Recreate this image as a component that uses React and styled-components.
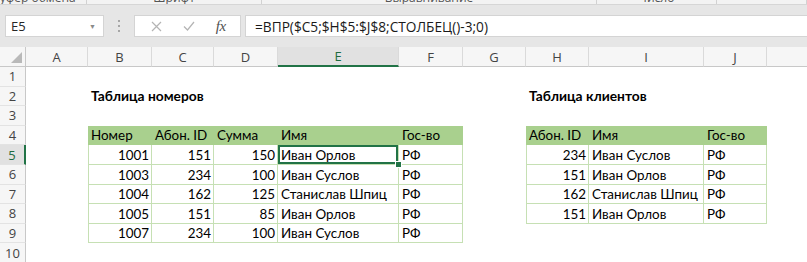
import React from 'react';
import styled, { createGlobalStyle, css } from 'styled-components';

const GlobalStyle = createGlobalStyle`
  html, body {
    margin: 0;
    padding: 0;
    background: #ffffff;
  }
  body {
    font-family: 'Open Sans', 'Noto Sans', sans-serif;
  }
`;

const Window = styled.div`
  width: 807px;
  height: 262px;
  overflow: hidden;
  display: flex;
  flex-direction: column;
  background: #ffffff;
`;

const RibbonStrip = styled.div`
  height: 4px;
  flex: none;
  display: flex;
  overflow: hidden;
  background: #f3f3f3;
  border-bottom: 1px solid #d6d6d6;
`;

const RibbonGroup = styled.div`
  width: ${(p) => p.$w}px;
  flex: none;
  display: flex;
  justify-content: center;
  border-right: 1px solid #d2d2d2;
  padding-right: ${(p) => p.$shift || 0}px;
  box-sizing: border-box;
`;

const RibbonLabel = styled.span`
  font-size: 12px;
  line-height: 12px;
  color: #555555;
  white-space: nowrap;
  transform: translateY(-8px);
`;

const FormulaBar = styled.div`
  height: 42px;
  flex: none;
  display: flex;
  align-items: flex-start;
  padding: 10px 0 0 5px;
  box-sizing: border-box;
  background: #e6e6e6;
`;

const NameBox = styled.div`
  width: 99px;
  height: 22px;
  box-sizing: border-box;
  display: flex;
  align-items: center;
  justify-content: space-between;
  padding: 0 7px 0 5px;
  background: #ffffff;
  border: 1px solid #d4d4d4;
  font-size: 13px;
  color: #262626;
`;

const Caret = styled.span`
  font-size: 7px;
  color: #8a8a8a;
`;

const Grip = styled.div`
  width: 30px;
  height: 22px;
  display: flex;
  flex-direction: column;
  align-items: center;
  justify-content: center;
  gap: 3px;

  span {
    width: 2px;
    height: 2px;
    background: #a6a6a6;
  }
`;

const FuncButtons = styled.div`
  width: 107px;
  height: 22px;
  box-sizing: border-box;
  display: flex;
  align-items: center;
  justify-content: space-around;
  padding: 0 4px 0 6px;
  background: #ffffff;
  border: 1px solid #d4d4d4;
`;

const Fx = styled.span`
  font-family: 'Liberation Serif', serif;
  font-style: italic;
  font-size: 15px;
  color: #505050;
  letter-spacing: -0.5px;
`;

const FormulaInput = styled.div`
  flex: 1;
  height: 22px;
  margin-left: 4px;
  box-sizing: border-box;
  display: flex;
  align-items: center;
  padding-left: 9px;
  background: #ffffff;
  border: 1px solid #d4d4d4;
  border-right: none;
  font-size: 13.7px;
  color: #1a1a1a;
  white-space: nowrap;
`;

const Sheet = styled.div`
  flex: 1;
  display: grid;
  grid-template-columns: 26px 62px 64px 62px 64px 121px 64px 63px 63px 115px 63px 64px;
  grid-template-rows: 20px repeat(10, 19.6px);
  background: #ffffff;
  overflow: hidden;
`;

const Corner = styled.div`
  background: #f6f6f6;
  border-right: 1px solid #c8c8c8;
  border-bottom: 1px solid #c8c8c8;
  display: flex;
  align-items: flex-end;
  justify-content: flex-end;
  padding: 0 3px 3px 0;
`;

const ColHead = styled.div`
  display: flex;
  align-items: center;
  justify-content: center;
  background: ${(p) => (p.$active ? '#e1e1e1' : '#f6f6f6')};
  border-right: 1px solid #dadada;
  border-bottom: ${(p) => (p.$active ? '2px solid #217346' : '1px solid #c8c8c8')};
  font-size: 13px;
  color: ${(p) => (p.$active ? '#1d6b40' : '#444444')};
  box-sizing: border-box;
`;

const RowHead = styled.div`
  display: flex;
  align-items: center;
  justify-content: center;
  background: ${(p) => (p.$active ? '#e1e1e1' : '#f6f6f6')};
  border-right: ${(p) => (p.$active ? '2px solid #217346' : '1px solid #c8c8c8')};
  border-bottom: 1px solid #e3e3e3;
  font-size: 13px;
  color: ${(p) => (p.$active ? '#1d6b40' : '#444444')};
  box-sizing: border-box;
`;

const tableEdge = '#c6e0b4';

const Cell = styled.div`
  position: relative;
  display: flex;
  align-items: flex-end;
  justify-content: ${(p) => (p.$num ? 'flex-end' : 'flex-start')};
  padding: 0 2px 2px 3px;
  box-sizing: border-box;
  font-family: 'Lato', 'Open Sans', sans-serif;
  font-size: 13.4px;
  line-height: 16px;
  color: #000000;
  white-space: nowrap;

  ${(p) =>
    p.$kind === 'head' &&
    css`
      background: #a9d08e;
    `}

  ${(p) =>
    p.$kind === 'body' &&
    css`
      border-right: 1px solid ${tableEdge};
      border-bottom: 1px solid ${tableEdge};
      padding-bottom: 1px;
    `}

  ${(p) =>
    p.$kind === 'body' &&
    p.$first &&
    css`
      border-left: 1px solid ${tableEdge};
    `}

  ${(p) =>
    p.$kind === 'title' &&
    css`
      font-weight: 700;
      font-size: 13.8px;
      overflow: visible;
    `}

  ${(p) =>
    p.$selected &&
    css`
      box-shadow: inset 0 0 0 2px #217346;
      z-index: 1;

      &::after {
        content: '';
        position: absolute;
        right: -4px;
        bottom: -4px;
        width: 5px;
        height: 5px;
        background: #217346;
        border: 1px solid #ffffff;
      }
    `}
`;

const columns = ['A', 'B', 'C', 'D', 'E', 'F', 'G', 'H', 'I', 'J', ''];

const leftHeader = ['Номер', 'Абон. ID', 'Сумма', 'Имя', 'Гос-во'];
const leftRows = [
  [1001, 151, 150, 'Иван Орлов', 'РФ'],
  [1003, 234, 100, 'Иван Суслов', 'РФ'],
  [1004, 162, 125, 'Станислав Шпиц', 'РФ'],
  [1005, 151, 85, 'Иван Орлов', 'РФ'],
  [1007, 234, 100, 'Иван Суслов', 'РФ'],
];

const rightHeader = ['Абон. ID', 'Имя', 'Гос-во'];
const rightRows = [
  [234, 'Иван Суслов', 'РФ'],
  [151, 'Иван Орлов', 'РФ'],
  [162, 'Станислав Шпиц', 'РФ'],
  [151, 'Иван Орлов', 'РФ'],
];

// map of "row:colIndex" -> what that cell holds
const buildCells = () => {
  const cells = {};
  cells['2:1'] = { kind: 'title', text: 'Таблица номеров' };
  cells['2:7'] = { kind: 'title', text: 'Таблица клиентов' };

  leftHeader.forEach((t, i) => {
    cells[`4:${1 + i}`] = { kind: 'head', text: t };
  });
  leftRows.forEach((row, r) => {
    row.forEach((v, i) => {
      cells[`${5 + r}:${1 + i}`] = {
        kind: 'body',
        text: v,
        num: typeof v === 'number',
        first: i === 0,
        selected: r === 0 && i === 3,
      };
    });
  });

  rightHeader.forEach((t, i) => {
    cells[`4:${7 + i}`] = { kind: 'head', text: t };
  });
  rightRows.forEach((row, r) => {
    row.forEach((v, i) => {
      cells[`${5 + r}:${7 + i}`] = {
        kind: 'body',
        text: v,
        num: typeof v === 'number',
        first: i === 0,
      };
    });
  });
  return cells;
};

const cells = buildCells();

const ribbonGroups = [
  { w: 87, label: 'Буфер обмена', shift: 18 },
  { w: 175, label: 'Шрифт' },
  { w: 335, label: 'Выравнивание' },
  { w: 120, label: 'Число' },
  { w: 90, label: '' },
];

const CrossIcon = () => (
  <svg width="11" height="11" viewBox="0 0 11 11">
    <path d="M1 1 L10 10 M10 1 L1 10" stroke="#b4b4b4" strokeWidth="1.2" fill="none" />
  </svg>
);

const CheckIcon = () => (
  <svg width="12" height="10" viewBox="0 0 12 10">
    <path d="M1 5.5 L4.5 9 L11 1" stroke="#b4b4b4" strokeWidth="1.2" fill="none" />
  </svg>
);

const CornerTriangle = () => (
  <svg width="11" height="11" viewBox="0 0 11 11">
    <polygon points="11,0 11,11 0,11" fill="#b9b9b9" />
  </svg>
);

const App = () => {
  const rows = Array.from({ length: 10 }, (_, i) => i + 1);

  return (
    <Window>
      <GlobalStyle />
      <RibbonStrip>
        {ribbonGroups.map((g, i) => (
          <RibbonGroup key={i} $w={g.w} $shift={g.shift}>
            <RibbonLabel>{g.label}</RibbonLabel>
          </RibbonGroup>
        ))}
      </RibbonStrip>

      <FormulaBar>
        <NameBox>
          <span>E5</span>
          <Caret>▼</Caret>
        </NameBox>
        <Grip>
          <span />
          <span />
          <span />
        </Grip>
        <FuncButtons>
          <CrossIcon />
          <CheckIcon />
          <Fx>fx</Fx>
        </FuncButtons>
        <FormulaInput>=ВПР($C5;$H$5:$J$8;СТОЛБЕЦ()-3;0)</FormulaInput>
      </FormulaBar>

      <Sheet>
        <Corner>
          <CornerTriangle />
        </Corner>
        {columns.map((c, ci) => (
          <ColHead key={ci} $active={c === 'E'}>
            {c}
          </ColHead>
        ))}

        {rows.map((r) => (
          <React.Fragment key={r}>
            <RowHead $active={r === 5}>{r}</RowHead>
            {columns.map((c, ci) => {
              const cell = cells[`${r}:${ci}`];
              if (!cell) return <Cell key={ci} />;
              return (
                <Cell
                  key={ci}
                  $kind={cell.kind}
                  $num={cell.num}
                  $first={cell.first}
                  $selected={cell.selected}
                >
                  {cell.text}
                </Cell>
              );
            })}
          </React.Fragment>
        ))}
      </Sheet>
    </Window>
  );
};

export default App;
